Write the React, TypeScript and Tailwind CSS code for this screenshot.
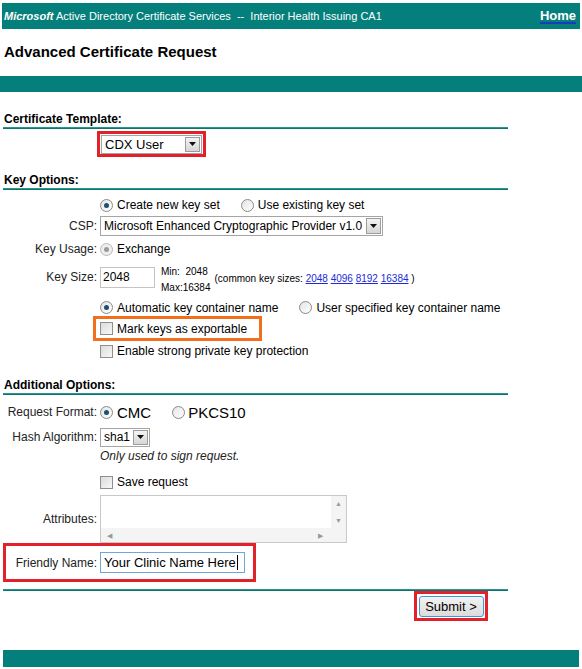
import type { ReactNode } from "react";

const font = { fontFamily: '"Liberation Sans", Arial, sans-serif' };

function Radio({ checked = false, disabled = false }: { checked?: boolean; disabled?: boolean }) {
  return (
    <span
      className={`relative inline-flex h-[13px] w-[13px] shrink-0 items-center justify-center rounded-full border ${
        disabled ? "border-[#b8b8b8] bg-[#eeeeee]" : "border-[#8a8a8a] bg-gradient-to-br from-[#e4e4e4] to-white"
      }`}
    >
      {checked ? (
        <span className={`h-[5px] w-[5px] rounded-full ${disabled ? "bg-[#9a9a9a]" : "bg-[#1d4f6e]"}`} />
      ) : null}
    </span>
  );
}

function Checkbox() {
  return (
    <span className="inline-block h-[13px] w-[13px] shrink-0 border border-[#8f8f8f] bg-gradient-to-br from-[#dcdcdc] to-[#f7f7f7]" />
  );
}

function SelectBox({ value, width, height = 19, text = "text-[13px]" }: { value: string; width: number; height?: number; text?: string }) {
  return (
    <div className="flex items-stretch border border-[#a5a5a5] bg-white" style={{ width, height }}>
      <span className={`flex-1 self-center whitespace-nowrap pl-[3px] leading-none text-black ${text}`}>{value}</span>
      <span className="m-[1px] flex w-[15px] shrink-0 items-center justify-center border border-[#9c9c9c] bg-gradient-to-b from-[#f4f4f4] to-[#d6d6d6]">
        <svg width="7" height="4" viewBox="0 0 7 4">
          <path d="M0 0h7L3.5 4z" fill="#111" />
        </svg>
      </span>
    </div>
  );
}

function Section({ title, className = "" }: { title: string; className?: string }) {
  return (
    <div className={`w-[505px] ${className}`}>
      <div className="h-[14px] pl-[1px] text-[12px] font-bold leading-[14px] text-black">{title}</div>
      <div className="mt-[1px] h-[2px] border-t border-[#2a9692] bg-[#0c7570]" />
    </div>
  );
}

function Row({ label, children, className = "" }: { label?: string; children: ReactNode; className?: string }) {
  return (
    <div className={`flex items-center leading-none ${className}`}>
      <div className="w-[97px] shrink-0 pr-[3px] text-right text-[12px] text-[#222]">{label}</div>
      <div className="flex items-center">{children}</div>
    </div>
  );
}

export default function App() {
  return (
    <div className="relative h-[669px] w-[582px] overflow-hidden bg-white text-black" style={font}>
      <header className="mx-[2px] mt-[3px] flex h-[26px] items-center justify-between bg-[#057f7b] pl-[2px] pr-[4px] text-white">
        <span className="text-[11px]">
          <span className="font-bold italic">Microsoft</span> Active Directory Certificate Services&nbsp; -- &nbsp;Interior
          Health Issuing CA1
        </span>
        <span className="text-[13px] font-bold underline decoration-[#1b3bbd] decoration-2 underline-offset-2">Home</span>
      </header>

      <h1 className="ml-[4px] mt-[15px] h-[16px] text-[15px] font-bold leading-[16px]">Advanced Certificate Request</h1>

      <div className="mt-[16px] h-[16px] bg-[#057f7b]" />

      <div className="ml-[3px]">
        <Section title="Certificate Template:" className="mt-[20px]" />

        <div className="ml-[94px] mt-[2px] flex h-[26px] w-[109px] items-center justify-center border-[3px] border-[#e3212b]">
          <SelectBox value="CDX User" width={101} height={19} />
        </div>

        <Section title="Key Options:" className="mt-[16px]" />

        <Row className="mt-[5px] h-[20px] text-[12px]">
          <span className="flex items-center gap-[4px]">
            <Radio checked /> Create new key set
          </span>
          <span className="ml-[21px] flex items-center gap-[4px]">
            <Radio /> Use existing key set
          </span>
        </Row>

        <Row label="CSP:" className="mt-[1px] h-[20px]">
          <SelectBox value="Microsoft Enhanced Cryptographic Provider v1.0" width={283} height={20} text="text-[12px]" />
        </Row>

        <Row label="Key Usage:" className="mt-[3px] h-[20px]">
          <span className="flex items-center gap-[4px] text-[12px]">
            <Radio checked disabled /> Exchange
          </span>
        </Row>

        <Row label="Key Size:" className="mt-[7px] h-[22px]">
          <div className="flex h-[21px] w-[55px] items-center border border-[#c4c4c4] pl-[2px] text-[12px]">2048</div>
          <div className="ml-[6px] mt-[6px] flex flex-col text-[10px] leading-[16px]">
            <span>Min:&nbsp; 2048</span>
            <span>Max:16384</span>
          </div>
          <span className="ml-[4px] mt-[4px] text-[10px]">
            (common key sizes: <span className="text-[#1a2bd8] underline">2048</span>{" "}
            <span className="text-[#1a2bd8] underline">4096</span>{" "}
            <span className="text-[#1a2bd8] underline">8192</span>{" "}
            <span className="text-[#1a2bd8] underline">16384</span> )
          </span>
        </Row>

        <Row className="mt-[11px] h-[17px] text-[12px]">
          <span className="flex items-center gap-[4px]">
            <Radio checked /> Automatic key container name
          </span>
          <span className="ml-[21px] flex items-center gap-[4px]">
            <Radio /> User specified key container name
          </span>
        </Row>

        <div className="ml-[90px] flex h-[25px] w-[169px] items-center gap-[4px] border-[3px] border-[#f26f1e] pl-[4px] text-[12px] leading-none">
          <Checkbox /> Mark keys as exportable
        </div>

        <Row className="mt-[1px] h-[18px] text-[12px]">
          <span className="flex items-center gap-[4px]">
            <Checkbox /> Enable strong private key protection
          </span>
        </Row>

        <Section title="Additional Options:" className="mt-[18px]" />

        <Row label="Request Format:" className="mt-[7px] h-[20px]">
          <span className="flex items-center gap-[4px] text-[15px]">
            <Radio checked /> CMC
          </span>
          <span className="ml-[21px] flex items-center gap-[3px] text-[15px]">
            <Radio /> PKCS10
          </span>
        </Row>

        <Row label="Hash Algorithm:" className="mt-[5px] h-[20px]">
          <SelectBox value="sha1" width={50} height={19} text="text-[12px]" />
        </Row>

        <Row className="mt-[1px] h-[16px]">
          <span className="text-[12px] italic text-[#222]">Only used to sign request.</span>
        </Row>

        <Row className="mt-[9px] h-[18px]">
          <span className="flex items-center gap-[4px] text-[12px]">
            <Checkbox /> Save request
          </span>
        </Row>

        <Row label="Attributes:" className="mt-[4px] h-[48px]">
          <div className="flex h-[48px] w-[247px] flex-col border border-[#c9c9c9]">
            <div className="flex flex-1">
              <div className="flex-1" />
              <div className="flex w-[15px] flex-col items-center justify-between bg-[#f4f4f4] py-[4px] text-[7px] text-[#9a9a9a]">
                <span>▲</span>
                <span>▼</span>
              </div>
            </div>
            <div className="flex h-[14px] items-center justify-between bg-[#f4f4f4] pl-[6px] pr-[23px] text-[7px] text-[#9a9a9a]">
              <span>◀</span>
              <span>▶</span>
            </div>
          </div>
        </Row>

        <div className="flex h-[39px] w-[253px] items-center border-[3px] border-[#e3212b] leading-none">
          <div className="w-[94px] shrink-0 pr-[3px] text-right text-[12px] text-[#222]">Friendly Name:</div>
          <div className="flex h-[21px] w-[145px] items-center border border-[#6fa8d8] pl-[3px] text-[13px]">
            Your Clinic Name Here<span className="ml-[1px] h-[15px] w-[1px] bg-black" />
          </div>
        </div>

        <div className="mt-[7px] h-[2px] w-[505px] border-t border-[#2a9692] bg-[#0c7570]" />

        <div className="ml-[411px] flex h-[30px] w-[74px] items-center justify-center border-[3px] border-[#e3212b]">
          <div className="flex h-[21px] w-[65px] items-center justify-center rounded-[3px] border border-[#3c9ad4] bg-gradient-to-b from-[#f2f2f2] to-[#dcdcdc] text-[13px] leading-none">
            Submit &gt;
          </div>
        </div>
      </div>

      <div className="mx-[3px] mt-[29px] h-[17px] bg-[#057f7b]" />
    </div>
  );
}
